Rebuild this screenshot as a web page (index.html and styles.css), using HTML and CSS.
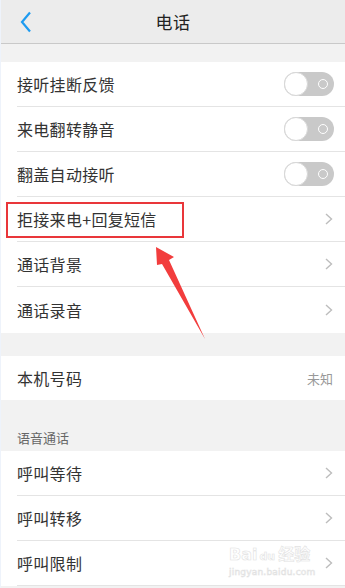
FILE: index.html
```html
<!DOCTYPE html>
<html lang="zh">
<head>
<meta charset="utf-8">
<link rel="stylesheet" href="styles.css">
</head>
<body>
<div class="page">
  <header class="topbar">
    <svg class="back" width="12" height="22" viewBox="0 0 12 22"><path d="M10 1.5 L2 11 L10 20.5" fill="none" stroke="#1e9bf0" stroke-width="2.2" stroke-linejoin="miter"/></svg>
    <div class="title">电话</div>
  </header>
  <div class="gap g1"></div>
  <section class="group">
    <div class="row"><div class="inner"><span class="label">接听挂断反馈</span><span class="toggle"><span class="knob"></span><span class="ring"></span></span></div></div>
    <div class="row"><div class="inner"><span class="label">来电翻转静音</span><span class="toggle"><span class="knob"></span><span class="ring"></span></span></div></div>
    <div class="row"><div class="inner"><span class="label">翻盖自动接听</span><span class="toggle"><span class="knob"></span><span class="ring"></span></span></div></div>
    <div class="row highlight"><div class="inner"><span class="label">拒接来电+回复短信</span><svg class="chev" width="8" height="12" viewBox="0 0 8 12"><path d="M1 1 L6.5 6 L1 11" fill="none" stroke="#bdbdbd" stroke-width="1.4"/></svg></div><div class="redbox"></div></div>
    <div class="row"><div class="inner"><span class="label">通话背景</span><svg class="chev" width="8" height="12" viewBox="0 0 8 12"><path d="M1 1 L6.5 6 L1 11" fill="none" stroke="#bdbdbd" stroke-width="1.4"/></svg></div></div>
    <div class="row last"><div class="inner"><span class="label">通话录音</span><svg class="chev" width="8" height="12" viewBox="0 0 8 12"><path d="M1 1 L6.5 6 L1 11" fill="none" stroke="#bdbdbd" stroke-width="1.4"/></svg></div></div>
  </section>
  <div class="gap g2"></div>
  <section class="group">
    <div class="row single"><div class="inner"><span class="label">本机号码</span><span class="value">未知</span></div></div>
  </section>
  <div class="gap g3"><span class="section-label">语音通话</span></div>
  <section class="group">
    <div class="row"><div class="inner"><span class="label">呼叫等待</span><svg class="chev" width="8" height="12" viewBox="0 0 8 12"><path d="M1 1 L6.5 6 L1 11" fill="none" stroke="#bdbdbd" stroke-width="1.4"/></svg></div></div>
    <div class="row"><div class="inner"><span class="label">呼叫转移</span><svg class="chev" width="8" height="12" viewBox="0 0 8 12"><path d="M1 1 L6.5 6 L1 11" fill="none" stroke="#bdbdbd" stroke-width="1.4"/></svg></div></div>
    <div class="row"><div class="inner"><span class="label">呼叫限制</span><svg class="chev" width="8" height="12" viewBox="0 0 8 12"><path d="M1 1 L6.5 6 L1 11" fill="none" stroke="#bdbdbd" stroke-width="1.4"/></svg></div></div>
  </section>
  <svg class="arrow" width="345" height="588" viewBox="0 0 345 588"><polygon points="155,247 173,257 168,260 204,339 161,264 156,265" fill="#f23d3d"/></svg>
  <div class="watermark"><div class="wm-top">Bai<span class="wm-du">du</span>经验</div><div class="wm-bot">jingyan.baidu.com</div></div>
</div>
</body>
</html>
```

FILE: styles.css
```css
html, body {
  margin: 0;
  padding: 0;
  background: #f2f2f2;
}
.page {
  position: relative;
  width: 345px;
  height: 588px;
  overflow: hidden;
  background: #f2f2f2;
  font-family: "Noto Sans CJK SC", "Noto Sans", sans-serif;
  border-left: 1px solid #eef3fb;
  box-sizing: border-box;
}
.topbar {
  height: 43px;
  border-bottom: 1px solid #c9c9c9;
  background: #ececec;
  display: flex;
  align-items: center;
  justify-content: center;
  position: relative;
}
.back {
  position: absolute;
  left: 19px;
  top: 11px;
}
.title {
  font-size: 17px;
  color: #222;
  letter-spacing: 0.5px;
}
.gap.g1 { height: 18px; }
.gap.g2 { height: 23px; }
.gap.g3 {
  height: 51px;
  display: flex;
  align-items: flex-end;
  padding-left: 16px;
  padding-bottom: 4px;
  box-sizing: border-box;
}
.section-label {
  font-size: 13px;
  color: #666;
  line-height: 18px;
}
.group {
  background: #fff;
}
.row {
  position: relative;
  padding-left: 16px;
}
.inner {
  height: 44px;
  border-bottom: 1px solid #e4e4e4;
  display: flex;
  align-items: center;
  justify-content: space-between;
  padding-right: 11px;
}
.row.last .inner {
  border-bottom: none;
  height: 46px;
}
.row.single .inner {
  border-bottom: none;
  height: 44px;
}
.label {
  font-size: 16px;
  color: #333;
  letter-spacing: 0.3px;
}
.value {
  font-size: 13px;
  color: #999;
  margin-right: 1px;
}
.chev {
  display: block;
  margin-right: 1px;
}
.toggle {
  position: relative;
  width: 50px;
  height: 24px;
  border-radius: 12px;
  background: #c9c9c9;
  display: block;
}
.knob {
  position: absolute;
  left: 0;
  top: 0;
  width: 24px;
  height: 24px;
  box-sizing: border-box;
  border-radius: 50%;
  background: #fff;
  border: 1px solid #d8d8d8;
}
.ring {
  position: absolute;
  right: 6px;
  top: 7px;
  width: 10px;
  height: 10px;
  box-sizing: border-box;
  border-radius: 50%;
  border: 1.6px solid #fff;
}
.redbox {
  position: absolute;
  left: 5px;
  top: 5px;
  width: 178px;
  height: 36px;
  box-sizing: border-box;
  border: 2px solid #e9363a;
  pointer-events: none;
}
.arrow {
  position: absolute;
  left: 0;
  top: 0;
  pointer-events: none;
}
.watermark {
  position: absolute;
  left: 228px;
  top: 546px;
  width: 100px;
  white-space: nowrap;
  color: transparent;
  -webkit-text-stroke: 0.6px #e2e2e2;
  font-family: "DejaVu Sans", "Noto Sans CJK SC", sans-serif;
  pointer-events: none;
}
.wm-top {
  font-size: 16px;
  font-weight: bold;
  line-height: 18px;
}
.wm-du {
  font-size: 11px;
  margin: 0 3px 0 2px;
}
.wm-bot {
  font-size: 9px;
  line-height: 12px;
  letter-spacing: 0.2px;
}
```
